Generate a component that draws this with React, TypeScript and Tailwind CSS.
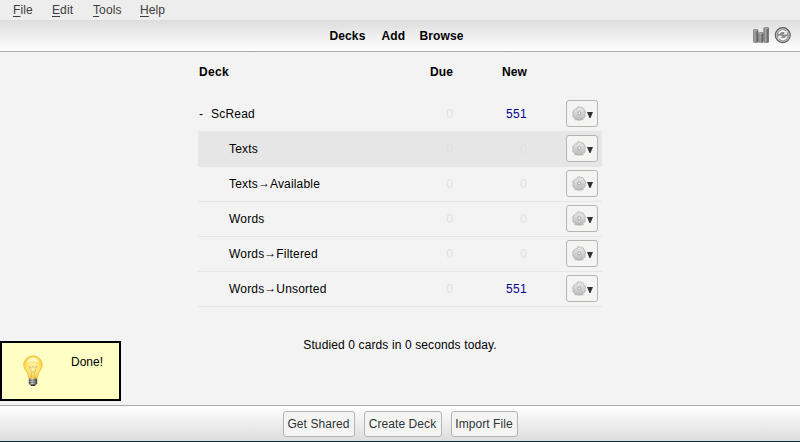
type Deck = { name: string; due: number; fresh: number; child: boolean; active?: boolean };

const decks: Deck[] = [
  { name: "ScRead", due: 0, fresh: 551, child: false },
  { name: "Texts", due: 0, fresh: 0, child: true, active: true },
  { name: "Texts→Available", due: 0, fresh: 0, child: true },
  { name: "Words", due: 0, fresh: 0, child: true },
  { name: "Words→Filtered", due: 0, fresh: 0, child: true },
  { name: "Words→Unsorted", due: 0, fresh: 551, child: true },
];

function Gear() {
  return (
    <svg width="14" height="15" viewBox="0 0 14 15" className="mt-px shrink-0">
      <defs>
        <linearGradient id="gear" x1="0" y1="0" x2="0" y2="1">
          <stop offset="0" stopColor="#e9e9e9" />
          <stop offset="1" stopColor="#bcbcbc" />
        </linearGradient>
      </defs>
      <ellipse cx="7" cy="13.6" rx="5" ry="0.9" fill="#aaa" opacity="0.6" />
      <path
        d="M5.6 .9h2.8l.7 1 1.9-.2 1 1.3-.1 1.2 1.5 1v2.2l-.7.7.7 1.1-.9 2.2-1.2.2-.6 1.4-1.6.2-1 .8H6l-.9-.8-1.8-.2-.7-1.3-1.3-.5-.6-2.1.6-1-.6-1 .4-2.1 1.2-.7V3.9l1.2-1 1.4.1z"
        fill="url(#gear)"
        stroke="#a9a9a9"
        strokeWidth="0.7"
      />
      <circle cx="7.2" cy="7.3" r="1.5" fill="#f3f3f3" stroke="#a0a0a0" strokeWidth="0.9" />
    </svg>
  );
}

function StatsIcon() {
  return (
    <svg width="16" height="17" viewBox="0 0 16 17">
      <defs>
        <linearGradient id="bar" x1="0" x2="1" y1="0" y2="0">
          <stop offset="0" stopColor="#777" />
          <stop offset=".35" stopColor="#a8a8a8" />
          <stop offset="1" stopColor="#4c4c4c" />
        </linearGradient>
      </defs>
      <rect x="0.3" y="2.5" width="4.7" height="13" rx="1" fill="url(#bar)" stroke="#777" strokeWidth=".6" />
      <rect x="5.5" y="5.5" width="4.7" height="10" rx="1" fill="url(#bar)" stroke="#777" strokeWidth=".6" />
      <rect x="10.8" y="0.5" width="4.9" height="15" rx="1" fill="url(#bar)" stroke="#6c6c6c" strokeWidth=".6" />
      <path d="M1 3.5h3.3M6.3 6.5h3.3M11.7 1.5h3.3" stroke="#aaa" strokeWidth="1" />
    </svg>
  );
}

function SyncIcon() {
  return (
    <svg width="17" height="17" viewBox="0 0 17 17">
      <circle cx="8.8" cy="8.1" r="7.5" fill="#8c8c8c" stroke="#5e5e5e" strokeWidth="1.1" />
      <circle cx="8.8" cy="8.1" r="6.3" fill="none" stroke="#c6c6c6" strokeWidth="1" />
      <path d="M4.9 6.8C5.6 3.6 9.4 3.2 11.4 5.2M12.7 9.4c-.7 3.2-4.5 3.6-6.5 1.6" fill="none" stroke="#fafafa" strokeWidth="1.8" />
      <path d="M13.2 3.4v4.1H9.1zM4.4 12.8V8.7h4.1z" fill="#fafafa" />
    </svg>
  );
}

function Bulb() {
  return (
    <svg width="20" height="32" viewBox="0 0 20 32">
      <defs>
        <radialGradient id="glass" cx=".5" cy=".48" r=".55">
          <stop offset="0" stopColor="#fff5b5" />
          <stop offset=".55" stopColor="#ffe778" />
          <stop offset="1" stopColor="#ffc934" />
        </radialGradient>
        <linearGradient id="socket" x1="0" x2="1" y1="0" y2="0">
          <stop offset="0" stopColor="#444" />
          <stop offset=".4" stopColor="#e4e4e4" />
          <stop offset="1" stopColor="#333" />
        </linearGradient>
      </defs>
      <path
        d="M10 1C4.8 1 .8 4.9.8 9.8c0 3.4 2 5.4 3.5 8 1.1 1.9.8 5 2 5.7h7.4c1.2-.7.9-3.8 2-5.7 1.5-2.6 3.5-4.6 3.5-8C19.2 4.9 15.2 1 10 1z"
        fill="url(#glass)"
        stroke="#f3b83a"
        strokeWidth="0.9"
      />
      <path d="M4 7.5C5 3.7 8 2.5 10 2.5s5 1.2 6 5C12 5.8 8 5.8 4 7.5z" fill="#fffbe0" opacity=".75" />
      <path d="M8.4 23V17L6 11l2.5 2L10 11l1.5 2 2.5-2-2.4 6v6M8.4 17h3.2" fill="none" stroke="#d3b55c" strokeWidth=".7" />
      <path d="M5.8 23.5h8.4v5L12.4 30.5H7.6l-1.8-2z" fill="url(#socket)" />
      <path d="M6 25.5l8-.7M6 27.5l8-.7M7 29.3h6" stroke="#555" strokeWidth=".7" />
      <path d="M8 29.7h4v1.3H8z" fill="#333" />
    </svg>
  );
}

function DeckName({ name }: { name: string }) {
  const [parent, leaf] = name.split("→");
  if (!leaf) return <span className="tracking-[0.2px]">{name}</span>;
  return (
    <span className="flex tracking-[0.18px]">
      {parent}
      <span className="-mt-px mb-px w-3 text-center tracking-normal">→</span>
      {leaf}
    </span>
  );
}

function Count({ value }: { value: number }) {
  return <span className={value ? "tracking-[0.33px] text-[#000099]" : "text-[#e0e0e0]"}>{value}</span>;
}

function DeckRow({ deck }: { deck: Deck }) {
  return (
    <div
      className={`grid h-[35px] grid-cols-[181px_74px_74px_75px] items-center border-b border-[#e6e6e6] ${deck.active ? "bg-[#e6e6e6]" : ""}`}
    >
      <div className={deck.child ? "pl-[31px]" : "flex pl-px"}>
        {!deck.child && <span className="w-3 text-[#000033]">-</span>}
        <DeckName name={deck.name} />
      </div>
      <div className="text-right">
        <Count value={deck.due} />
      </div>
      <div className="text-right">
        <Count value={deck.fresh} />
      </div>
      <div className="flex justify-end pr-1">
        <button className="-mt-px mb-px flex h-[27px] w-8 items-center rounded-[3px] border border-[#b4b4b4] bg-[#f4f4f3] pl-[5px]">
          <Gear />
          <svg width="6" height="6" viewBox="0 0 6 6" className="ml-px mt-1">
            <path d="M0 0h6L3.5 6h-1z" fill="#2e3436" />
          </svg>
        </button>
      </div>
    </div>
  );
}

const menus = [
  { label: "File", width: "w-[39px]" },
  { label: "Edit", width: "w-[41px]" },
  { label: "Tools", width: "w-[47px]" },
  { label: "Help", width: "w-10" },
];

const actions = [
  { label: "Get Shared", width: "w-[72px]" },
  { label: "Create Deck", width: "w-[78px]" },
  { label: "Import File", width: "w-[67px]" },
];

export default function App() {
  return (
    <div className="relative flex h-[442px] w-[800px] flex-col overflow-hidden bg-[#f3f3f3] font-['Liberation_Sans',Arial,sans-serif] text-[12px] leading-[14px] text-black">
      <nav className="flex h-5 items-center bg-[#ededed] pl-[13px] tracking-[0.1px] text-[#3c3c3c]">
        {menus.map((m) => (
          <span key={m.label} className={m.width}>
            <span className="underline underline-offset-2">{m.label[0]}</span>
            {m.label.slice(1)}
          </span>
        ))}
      </nav>
      <header className="grid h-8 grid-cols-[1fr_auto_1fr] items-center border-b border-[#aaa] bg-linear-to-b from-[#ddd] to-white">
        <div />
        <div className="flex gap-[15px] pr-[7px] font-bold tracking-[0.15px]">
          <span className="w-[37px]">Decks</span>
          <span className="w-[23px]">Add</span>
          <span>Browse</span>
        </div>
        <div className="flex items-center justify-end gap-[5px] pr-[9px]">
          <StatsIcon />
          <SyncIcon />
        </div>
      </header>
      <main className="flex h-[353px] flex-col items-center">
        <div className="w-[404px] pt-[13px]">
          <div className="grid h-8 grid-cols-[181px_74px_74px_75px] font-bold tracking-[0.15px]">
            <span className="pl-px tracking-[0.3px]">Deck</span>
            <span className="col-start-2 text-right">Due</span>
            <span className="text-right">New</span>
          </div>
          {decks.map((d) => (
            <DeckRow key={d.name} deck={d} />
          ))}
        </div>
        <p className="mt-[31px] tracking-[0.12px]">Studied 0 cards in 0 seconds today.</p>
      </main>
      <footer className="flex h-9 items-start justify-center gap-[9px] border-t border-[#aaa] bg-linear-to-b from-white to-[#ddd] pt-[5px]">
        {actions.map((a) => (
          <button
            key={a.label}
            className={`h-[26px] rounded-[3px] border border-[#b4b4b4] bg-[#f4f4f3] whitespace-nowrap tracking-[0.08px] text-[#2e3436] ${a.width}`}
          >
            {a.label}
          </button>
        ))}
      </footer>
      <div className="h-px bg-[#002b36]" />
      <div className="absolute top-[341px] left-0 flex h-[60px] w-[121px] border-2 border-black bg-[#ffffc5] pt-3 pl-[21px]">
        <Bulb />
        <span className="ml-7">Done!</span>
      </div>
    </div>
  );
}
